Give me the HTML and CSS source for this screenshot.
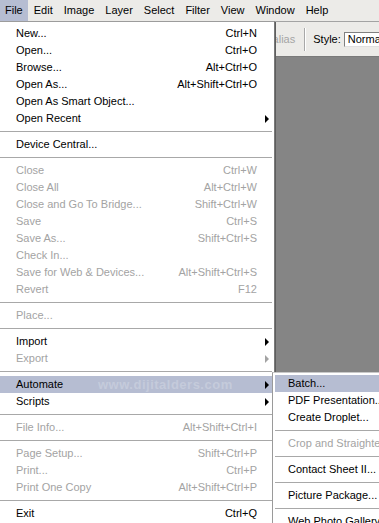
FILE: index.html
```html
<!DOCTYPE html>
<html>
<head>
<meta charset="utf-8">
<title>Photoshop File menu</title>
<link rel="stylesheet" href="styles.css">
</head>
<body>
<div class="app">
  <div class="menubar">
    <span class="mb-item active">File</span>
    <span class="mb-item">Edit</span>
    <span class="mb-item">Image</span>
    <span class="mb-item">Layer</span>
    <span class="mb-item">Select</span>
    <span class="mb-item">Filter</span>
    <span class="mb-item">View</span>
    <span class="mb-item">Window</span>
    <span class="mb-item">Help</span>
  </div>
  <div class="toolbar">
    <span class="tb-spacer"></span>
    <span class="tb-label disabled">Anti-alias</span>
    <span class="tb-sep"></span>
    <span class="tb-label">Style:</span>
    <span class="tb-select">Normal</span>
  </div>
  <div class="canvas"></div>

  <div class="menu main-menu">
    <div class="row"><span>New...</span><span class="sc">Ctrl+N</span></div>
    <div class="row"><span>Open...</span><span class="sc">Ctrl+O</span></div>
    <div class="row"><span>Browse...</span><span class="sc">Alt+Ctrl+O</span></div>
    <div class="row"><span>Open As...</span><span class="sc">Alt+Shift+Ctrl+O</span></div>
    <div class="row"><span>Open As Smart Object...</span></div>
    <div class="row"><span>Open Recent</span><span class="sc"></span><span class="arrow"></span></div>
    <div class="sep"></div>
    <div class="row"><span>Device Central...</span></div>
    <div class="sep"></div>
    <div class="row dis"><span>Close</span><span class="sc">Ctrl+W</span></div>
    <div class="row dis"><span>Close All</span><span class="sc">Alt+Ctrl+W</span></div>
    <div class="row dis"><span>Close and Go To Bridge...</span><span class="sc">Shift+Ctrl+W</span></div>
    <div class="row dis"><span>Save</span><span class="sc">Ctrl+S</span></div>
    <div class="row dis"><span>Save As...</span><span class="sc">Shift+Ctrl+S</span></div>
    <div class="row dis"><span>Check In...</span></div>
    <div class="row dis"><span>Save for Web &amp; Devices...</span><span class="sc">Alt+Shift+Ctrl+S</span></div>
    <div class="row dis"><span>Revert</span><span class="sc">F12</span></div>
    <div class="sep"></div>
    <div class="row dis"><span>Place...</span></div>
    <div class="sep"></div>
    <div class="row"><span>Import</span><span class="sc"></span><span class="arrow"></span></div>
    <div class="row dis"><span>Export</span><span class="sc"></span><span class="arrow"></span></div>
    <div class="sep"></div>
    <div class="row hl"><span>Automate</span><span class="sc"></span><span class="arrow"></span><span class="watermark">www.dijitalders.com</span></div>
    <div class="row"><span>Scripts</span><span class="sc"></span><span class="arrow"></span></div>
    <div class="sep"></div>
    <div class="row dis"><span>File Info...</span><span class="sc">Alt+Shift+Ctrl+I</span></div>
    <div class="sep"></div>
    <div class="row dis"><span>Page Setup...</span><span class="sc">Shift+Ctrl+P</span></div>
    <div class="row dis"><span>Print...</span><span class="sc">Ctrl+P</span></div>
    <div class="row dis"><span>Print One Copy</span><span class="sc">Alt+Shift+Ctrl+P</span></div>
    <div class="sep"></div>
    <div class="row"><span>Exit</span><span class="sc">Ctrl+Q</span></div>
  </div>

  <div class="menu sub-menu">
    <div class="srow hl">Batch...</div>
    <div class="srow">PDF Presentation...</div>
    <div class="srow">Create Droplet...</div>
    <div class="sep"></div>
    <div class="srow dis">Crop and Straighten Photos</div>
    <div class="sep"></div>
    <div class="srow">Contact Sheet II...</div>
    <div class="sep"></div>
    <div class="srow">Picture Package...</div>
    <div class="sep"></div>
    <div class="srow">Web Photo Gallery...</div>
  </div>
</div>
</body>
</html>
```

FILE: styles.css
```css
html, body {
  margin: 0;
  padding: 0;
  overflow: hidden;
}
body {
  width: 379px;
  height: 523px;
  font-family: "Liberation Sans", Arial, sans-serif;
  font-size: 11px;
  color: #000;
  background: #858585;
}
.app {
  position: relative;
  width: 379px;
  height: 523px;
  overflow: hidden;
  display: flex;
  flex-direction: column;
}
.menubar {
  display: flex;
  gap: 1px;
  height: 21px;
  line-height: 21px;
  background: #ecebe8;
  border-bottom: 1px solid #a3a3a3;
  white-space: nowrap;
}
.mb-item {
  padding: 0 5px;
}
.mb-item.active {
  background: #b6bdd2;
}
.toolbar {
  display: flex;
  align-items: center;
  height: 34px;
  background: #ecebe8;
  white-space: nowrap;
}
.tb-spacer {
  flex: 0 0 250px;
}
.tb-label {
  flex: 0 0 auto;
}
.tb-label.disabled {
  color: #a5a5a5;
}
.tb-sep {
  flex: 0 0 0;
  width: 0;
  height: 23px;
  margin: 0 7px 0 9px;
  border-left: 1px solid #a8a8a8;
  border-right: 1px solid #fff;
}
.tb-select {
  margin-left: 3px;
  height: 13px;
  line-height: 13px;
  padding: 0 3px;
  width: 60px;
  flex: 0 0 auto;
  background: #fff;
  border: 1px solid #808080;
  border-color: #808080 #e0e0e0 #e0e0e0 #808080;
}
.canvas {
  flex: 1;
  background: #858585;
  border-top: 1px solid #7a7a7a;
}
.menu {
  position: absolute;
  background: #fff;
  border: 1px solid #9c9c9c;
  padding: 2px;
}
.main-menu {
  top: 21px;
  left: -3px;
  width: 272px;
  padding-top: 3px;
  border-right-color: #7a7a7a;
  box-shadow: 1px 1px 0 #5e5e5e;
}
.sub-menu {
  top: 372px;
  left: 272px;
  width: 140px;
  border-color: #c9c9c9 #7a7a7a #7a7a7a #9a9a9a;
}
.row {
  position: relative;
  display: grid;
  grid-template-columns: 1fr auto 15px;
  align-items: center;
  height: 17px;
  line-height: 17px;
  padding-left: 16px;
  white-space: nowrap;
}
.srow {
  height: 17px;
  line-height: 17px;
  padding-left: 13px;
  white-space: nowrap;
}
.dis {
  color: #a3a3a3;
}
.hl {
  background: #b6bdd2;
}
.arrow {
  grid-column: 3;
  justify-self: start;
  margin-left: 8px;
  width: 0;
  height: 0;
  border-left: 4px solid #000;
  border-top: 4px solid transparent;
  border-bottom: 4px solid transparent;
}
.dis .arrow {
  border-left-color: #a3a3a3;
}
.sep {
  height: 0;
  margin: 4px 0;
  border-top: 1px solid #a8a8a8;
}
.watermark {
  position: absolute;
  left: 98px;
  top: 0;
  font-weight: bold;
  font-size: 13px;
  letter-spacing: 0.5px;
  color: rgba(255, 255, 255, 0.22);
}
```
